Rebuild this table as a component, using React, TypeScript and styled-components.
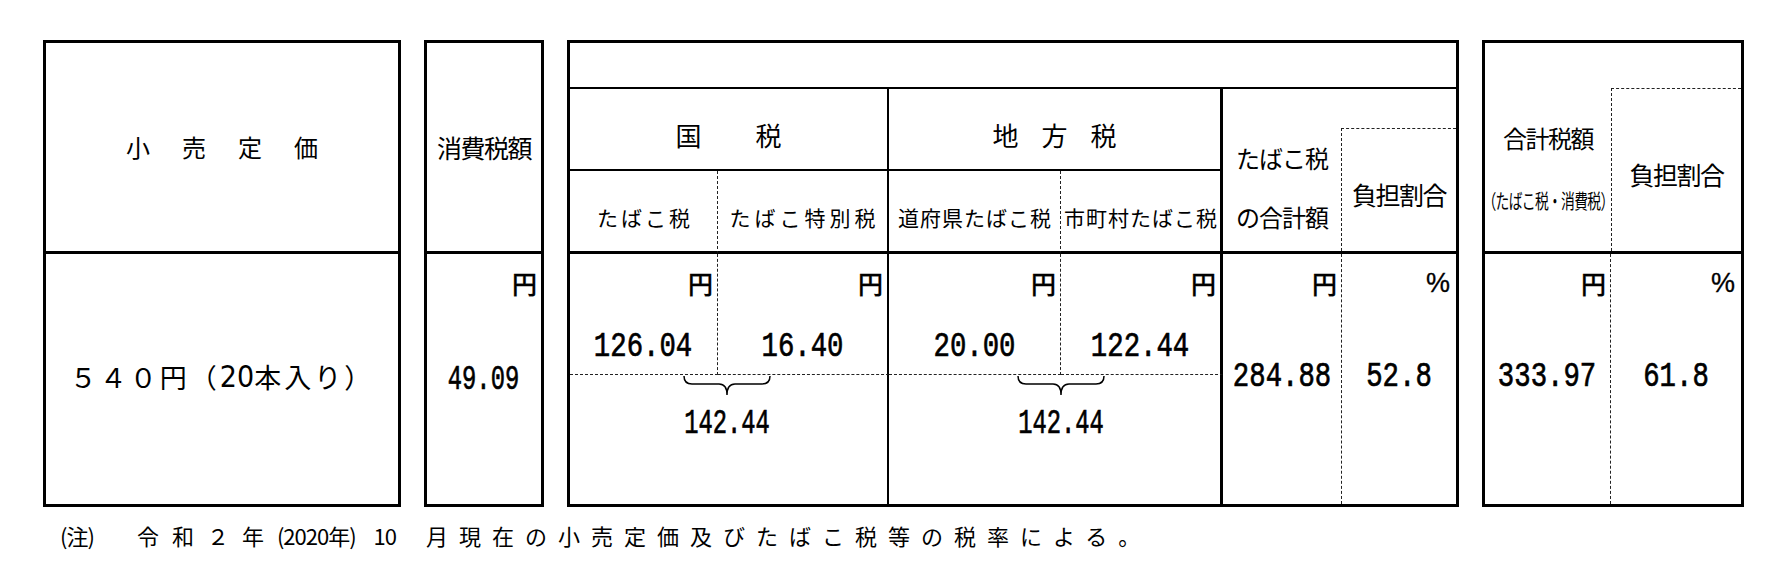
import React from 'react'
import styled, { createGlobalStyle } from 'styled-components'

const GlobalStyle = createGlobalStyle`
  html, body {
    margin: 0;
    padding: 0;
    background: #fff;
  }
  body {
    font-family: "Noto Sans CJK JP", "Noto Sans", sans-serif;
    color: #000;
  }
`

type Line = 'dashed' | 'thin' | 'thick' | 'none'

const lineCss = (l: Line) =>
  l === 'dashed'
    ? '1px dashed #222'
    : l === 'thin'
    ? '2px solid #000'
    : l === 'thick'
    ? '3px solid #000'
    : 'none'

const Page = styled.div`
  width: 1788px;
  height: 588px;
  box-sizing: border-box;
  padding: 40px 0 0 43px;
`

const TableRow = styled.div`
  display: flex;
  gap: 23px;
  align-items: flex-start;
`

const Frame = styled.div<{ $cols: string; $rows: string; $w: number }>`
  width: ${(p) => p.$w}px;
  height: 467px;
  box-sizing: border-box;
  border: 3px solid #000;
  display: grid;
  grid-template-columns: ${(p) => p.$cols};
  grid-template-rows: ${(p) => p.$rows};
`

const HeadCell = styled.div`
  border-bottom: 3px solid #000;
  display: flex;
  align-items: center;
  justify-content: center;
`

const BigLabel = styled.span<{ $ls: number; $size?: number }>`
  font-size: ${(p) => p.$size ?? 24}px;
  letter-spacing: ${(p) => p.$ls}px;
  padding-left: ${(p) => Math.max(p.$ls, 0)}px;
  line-height: 1;
  white-space: nowrap;
`

const PriceText = styled.div`
  display: flex;
  align-items: center;
  justify-content: center;
  padding-bottom: 6px;
  font-size: 27px;
  letter-spacing: 3px;
  white-space: nowrap;
`

const Digits = styled.span`
  font-family: "Liberation Sans Narrow", "DejaVu Sans Condensed", "Liberation Sans", sans-serif;
  font-size: 30px;
  letter-spacing: 0;
`

/* top blank strip of the tobacco tax table */
const Blank = styled.div`
  grid-column: 1 / span 6;
  border-bottom: 2px solid #000;
`

const GroupHead = styled.div<{ $col: number; $right: Line }>`
  grid-column: ${(p) => p.$col} / span 2;
  grid-row: 2;
  border-bottom: 2px solid #000;
  border-right: ${(p) => lineCss(p.$right)};
  display: flex;
  align-items: center;
  justify-content: center;
  padding-top: 12px;
`

const SubHead = styled.div<{ $col: number; $right: Line; $ls: number }>`
  grid-column: ${(p) => p.$col};
  grid-row: 3;
  border-bottom: 3px solid #000;
  border-right: ${(p) => lineCss(p.$right)};
  display: flex;
  align-items: center;
  justify-content: center;
  padding: 12px 0 0 ${(p) => p.$ls}px;
  font-size: 21px;
  letter-spacing: ${(p) => p.$ls}px;
  white-space: nowrap;
`

const StackHead = styled.div<{ $col: number }>`
  grid-column: ${(p) => p.$col};
  grid-row: 2 / span 2;
  border-bottom: 3px solid #000;
  display: flex;
  flex-direction: column;
  align-items: center;
  justify-content: center;
  padding-top: 34px;
  gap: 35px;
  font-size: 24px;
  letter-spacing: -1px;
  line-height: 1;
  white-space: nowrap;
`

const RatioHead = styled.div<{ $col: number; $rows: string; $drop: number }>`
  grid-column: ${(p) => p.$col};
  grid-row: ${(p) => p.$rows};
  border-bottom: 3px solid #000;
  display: flex;
  flex-direction: column;
  padding-top: ${(p) => p.$drop}px;
`

const RatioBox = styled.div`
  flex: 1;
  border-top: 1px dashed #222;
  border-left: 1px dashed #222;
  display: flex;
  align-items: center;
  justify-content: center;
  padding-top: 8px;
  font-size: 25px;
  letter-spacing: -1.5px;
  white-space: nowrap;
`

const TotalHead = styled.div`
  border-bottom: 3px solid #000;
  display: flex;
  flex-direction: column;
  align-items: center;
  justify-content: center;
  gap: 41px;
  padding-top: 42px;
  line-height: 1;
  white-space: nowrap;
`

const TotalTitle = styled.span`
  font-size: 24px;
  letter-spacing: -1.5px;
`

const TotalNote = styled.span`
  display: inline-block;
  font-size: 20px;
  letter-spacing: -1px;
  transform: scaleX(0.69);
`

/* data cells */
const ValueCell = styled.div<{
  $col?: number
  $rows?: string
  $right?: Line
  $left?: Line
  $bottom?: Line
  $gap: number
}>`
  ${(p) => (p.$col ? `grid-column: ${p.$col};` : '')}
  ${(p) => (p.$rows ? `grid-row: ${p.$rows};` : '')}
  border-right: ${(p) => lineCss(p.$right ?? 'none')};
  border-left: ${(p) => lineCss(p.$left ?? 'none')};
  border-bottom: ${(p) => lineCss(p.$bottom ?? 'none')};
  display: flex;
  flex-direction: column;
  align-items: center;
  & > span:last-child {
    margin-top: ${(p) => p.$gap}px;
  }
`

const Unit = styled.span<{ $latin?: boolean }>`
  align-self: flex-end;
  margin: 17px ${(p) => (p.$latin ? 6 : 4)}px 0 0;
  font-family: ${(p) =>
    p.$latin ? '"Liberation Sans", Arial, sans-serif' : 'inherit'};
  font-size: ${(p) => (p.$latin ? 27 : 25)}px;
  font-weight: 500;
  line-height: 24px;
  -webkit-text-stroke: 0.3px #000;
`

const Num = styled.span<{ $narrow?: boolean }>`
  display: inline-block;
  font-family: "Liberation Mono", "DejaVu Sans Mono", monospace;
  font-size: 35px;
  line-height: 34px;
  -webkit-text-stroke: 0.7px #000;
  transform: scaleX(${(p) => (p.$narrow ? 0.68 : 0.78)});
  white-space: nowrap;
`

const SumCell = styled.div<{ $col: number; $right: Line; $split: number; $shift: number }>`
  grid-column: ${(p) => p.$col} / span 2;
  grid-row: 5;
  border-right: ${(p) => lineCss(p.$right)};
  & > div {
    width: ${(p) => p.$split * 2}px;
    padding-left: ${(p) => p.$shift * 2}px;
    box-sizing: border-box;
  }
`

const SumStack = styled.div`
  display: flex;
  flex-direction: column;
  align-items: center;
  gap: 11px;
`

const Note = styled.p`
  margin: 17px 0 0 17px;
  display: flex;
  align-items: baseline;
  font-size: 22px;
  line-height: 22px;
  white-space: nowrap;
`

const Spaced = styled.span<{ $ls: number }>`
  letter-spacing: ${(p) => p.$ls}px;
`

const Tight = styled.span<{ $after: number }>`
  letter-spacing: -1px;
  margin-right: ${(p) => p.$after}px;
`

const Brace: React.FC = () => (
  <svg width="92" height="21" viewBox="0 0 92 21">
    <path
      d="M3 1 Q3 9 11 9 L38 9 Q46 9 46 20 Q46 9 54 9 L81 9 Q89 9 89 1"
      fill="none"
      stroke="#000"
      strokeWidth="1.5"
    />
  </svg>
)

const App: React.FC = () => {
  return (
    <Page>
      <GlobalStyle />
      <TableRow>
        <Frame $w={358} $cols="1fr" $rows="211px 250px">
          <HeadCell>
            <BigLabel $ls={32}>小売定価</BigLabel>
          </HeadCell>
          <PriceText>
            ５４０円（<Digits>20</Digits>本入り）
          </PriceText>
        </Frame>

        <Frame $w={120} $cols="1fr" $rows="211px 250px">
          <HeadCell>
            <BigLabel $ls={-1.5} $size={25}>
              消費税額
            </BigLabel>
          </HeadCell>
          <ValueCell $gap={68}>
            <Unit>円</Unit>
            <Num $narrow>49.09</Num>
          </ValueCell>
        </Frame>

        <Frame
          $w={892}
          $cols="148px 171px 172px 162px 118px 115px"
          $rows="46px 82px 83px 121px 129px"
        >
          <Blank />
          <GroupHead $col={1} $right="thin">
            <BigLabel $ls={54} $size={26}>
              国税
            </BigLabel>
          </GroupHead>
          <GroupHead $col={3} $right="thick">
            <BigLabel $ls={23} $size={26}>
              地方税
            </BigLabel>
          </GroupHead>
          <StackHead $col={5}>
            <span>たばこ税</span>
            <span>の合計額</span>
          </StackHead>
          <RatioHead $col={6} $rows="2 / span 2" $drop={39}>
            <RatioBox>負担割合</RatioBox>
          </RatioHead>

          <SubHead $col={1} $right="dashed" $ls={3}>
            たばこ税
          </SubHead>
          <SubHead $col={2} $right="thin" $ls={4}>
            たばこ特別税
          </SubHead>
          <SubHead $col={3} $right="dashed" $ls={1}>
            道府県たばこ税
          </SubHead>
          <SubHead $col={4} $right="thick" $ls={1}>
            市町村たばこ税
          </SubHead>

          <ValueCell $col={1} $rows="4" $right="dashed" $bottom="dashed" $gap={35}>
            <Unit>円</Unit>
            <Num>126.04</Num>
          </ValueCell>
          <ValueCell $col={2} $rows="4" $right="thin" $bottom="dashed" $gap={35}>
            <Unit>円</Unit>
            <Num>16.40</Num>
          </ValueCell>
          <ValueCell $col={3} $rows="4" $right="dashed" $bottom="dashed" $gap={35}>
            <Unit>円</Unit>
            <Num>20.00</Num>
          </ValueCell>
          <ValueCell $col={4} $rows="4" $right="thick" $bottom="dashed" $gap={35}>
            <Unit>円</Unit>
            <Num>122.44</Num>
          </ValueCell>
          <ValueCell $col={5} $rows="4 / span 2" $gap={65}>
            <Unit>円</Unit>
            <Num>284.88</Num>
          </ValueCell>
          <ValueCell $col={6} $rows="4 / span 2" $left="dashed" $gap={65}>
            <Unit $latin>%</Unit>
            <Num>52.8</Num>
          </ValueCell>

          <SumCell $col={1} $right="thin" $split={148} $shift={9}>
            <SumStack>
              <Brace />
              <Num $narrow>142.44</Num>
            </SumStack>
          </SumCell>
          <SumCell $col={3} $right="thick" $split={172} $shift={-3}>
            <SumStack>
              <Brace />
              <Num $narrow>142.44</Num>
            </SumStack>
          </SumCell>
        </Frame>

        <Frame $w={262} $cols="126px 130px" $rows="211px 250px">
          <TotalHead>
            <TotalTitle>合計税額</TotalTitle>
            <TotalNote>（たばこ税・消費税）</TotalNote>
          </TotalHead>
          <RatioHead $col={2} $rows="1" $drop={45}>
            <RatioBox>負担割合</RatioBox>
          </RatioHead>
          <ValueCell $right="dashed" $gap={65}>
            <Unit>円</Unit>
            <Num>333.97</Num>
          </ValueCell>
          <ValueCell $gap={65}>
            <Unit $latin>%</Unit>
            <Num>61.8</Num>
          </ValueCell>
        </Frame>
      </TableRow>
      <Note>
        <Tight $after={43}>(注)</Tight>
        <Spaced $ls={13}>令和２年</Spaced>
        <Tight $after={18}>(2020年)</Tight>
        <Tight $after={30}>10</Tight>
        <Spaced $ls={11}>月現在の小売定価及びたばこ税等の税率による。</Spaced>
      </Note>
    </Page>
  )
}

export default App
